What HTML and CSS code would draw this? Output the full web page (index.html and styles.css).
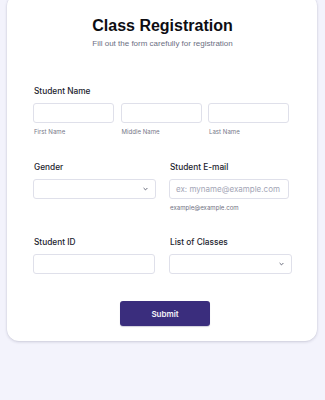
FILE: index.html
```html
<!DOCTYPE html>
<html lang="en">
<head>
<meta charset="utf-8">
<title>Class Registration</title>
<link rel="stylesheet" href="styles.css">
</head>
<body>
<main class="card">
  <header class="head">
    <h1 class="title">Class Registration</h1>
    <p class="subtitle">Fill out the form carefully for registration</p>
  </header>

  <section class="field name-field">
    <div class="label">Student Name</div>
    <div class="name-row">
      <div class="sub-field">
        <div class="input"></div>
        <div class="sublabel">First Name</div>
      </div>
      <div class="sub-field">
        <div class="input"></div>
        <div class="sublabel">Middle Name</div>
      </div>
      <div class="sub-field">
        <div class="input"></div>
        <div class="sublabel">Last Name</div>
      </div>
    </div>
  </section>

  <section class="two-col row-gender">
    <div class="field">
      <div class="label">Gender</div>
      <div class="input select">
        <svg class="chev" width="5" height="4" viewBox="0 0 5 4"><path d="M0.6 1 L2.5 2.9 L4.4 1" fill="none" stroke="#55586a" stroke-width="0.9"/></svg>
      </div>
    </div>
    <div class="field">
      <div class="label">Student E-mail</div>
      <div class="input email"><span class="placeholder">ex: myname@example.com</span></div>
      <div class="sublabel hint">example@example.com</div>
    </div>
  </section>

  <section class="two-col row-id">
    <div class="field">
      <div class="label">Student ID</div>
      <div class="input"></div>
    </div>
    <div class="field">
      <div class="label">List of Classes</div>
      <div class="input select">
        <svg class="chev" width="5" height="4" viewBox="0 0 5 4"><path d="M0.6 1 L2.5 2.9 L4.4 1" fill="none" stroke="#55586a" stroke-width="0.9"/></svg>
      </div>
    </div>
  </section>

  <div class="actions">
    <button class="submit" type="button">Submit</button>
  </div>
</main>
</body>
</html>
```

FILE: styles.css
```css
html, body {
  margin: 0;
  padding: 0;
}
body {
  background: #f3f3fc;
  width: 325px;
  height: 400px;
  overflow: hidden;
  font-family: Inter, "Noto Sans", sans-serif;
  color: #2b2c38;
}
.card {
  box-sizing: border-box;
  width: 310px;
  height: 347px;
  margin: -6px 0 0 7px;
  background: #ffffff;
  border-radius: 12px;
  box-shadow: 0 1px 3px rgba(40, 40, 80, 0.18), 0 0 0 0.5px rgba(60, 60, 110, 0.06);
  padding: 23px 0 0 26px;
}
.head {
  width: 259px;
  text-align: center;
}
.title {
  margin: 0;
  font-family: "Liberation Sans", Arial, sans-serif;
  font-weight: 700;
  font-size: 16px;
  line-height: 18px;
  color: #0d0d12;
}
.subtitle {
  margin: 4px 0 0;
  font-family: "Liberation Sans", Arial, sans-serif;
  font-size: 8px;
  line-height: 10px;
  color: #6c6f82;
}
.label {
  font-size: 8.3px;
  line-height: 10px;
  font-weight: 500;
  color: #22232e;
  margin-bottom: 7px;
}
.name-field {
  margin-top: 37px;
  margin-left: 1px;
}
.name-row {
  display: grid;
  grid-template-columns: 81px 81px 81px;
  column-gap: 6.5px;
  margin-left: -1px;
}
.input {
  box-sizing: border-box;
  height: 20px;
  border: 1px solid #dfe0ea;
  border-radius: 3px;
  background: #fff;
  position: relative;
}
.sublabel {
  margin-top: 5px;
  font-size: 6.1px;
  line-height: 8px;
  color: #767888;
  padding-left: 1px;
}
.two-col {
  display: grid;
  grid-template-columns: 123px 123px;
  column-gap: 13px;
  align-items: start;
}
.two-col .label {
  padding-left: 1px;
}
.row-gender {
  margin-top: 26px;
}
.row-id {
  margin-top: 25px;
}
.row-id .field:first-child .input {
  width: 122px;
}
.email {
  width: 120px;
  display: flex;
  align-items: center;
  padding-left: 6px;
}
.placeholder {
  font-size: 8px;
  line-height: 10px;
  color: #a3a5b6;
  white-space: nowrap;
}
.hint {
  color: #6f7182;
}
.select {
  display: flex;
  align-items: center;
  justify-content: flex-end;
  padding-right: 7px;
}
.chev {
  display: block;
}
.actions {
  width: 259px;
  display: flex;
  justify-content: center;
  margin-top: 27px;
}
.submit {
  width: 90px;
  height: 25px;
  border: 0;
  border-radius: 3px;
  background: #3a2d7d;
  color: #f4f3fa;
  font-family: Inter, "Noto Sans", sans-serif;
  font-size: 8px;
  font-weight: 600;
  padding: 0;
  box-shadow: 0 1px 1px rgba(30, 20, 80, 0.2);
  margin-left: 5px;
}
```
